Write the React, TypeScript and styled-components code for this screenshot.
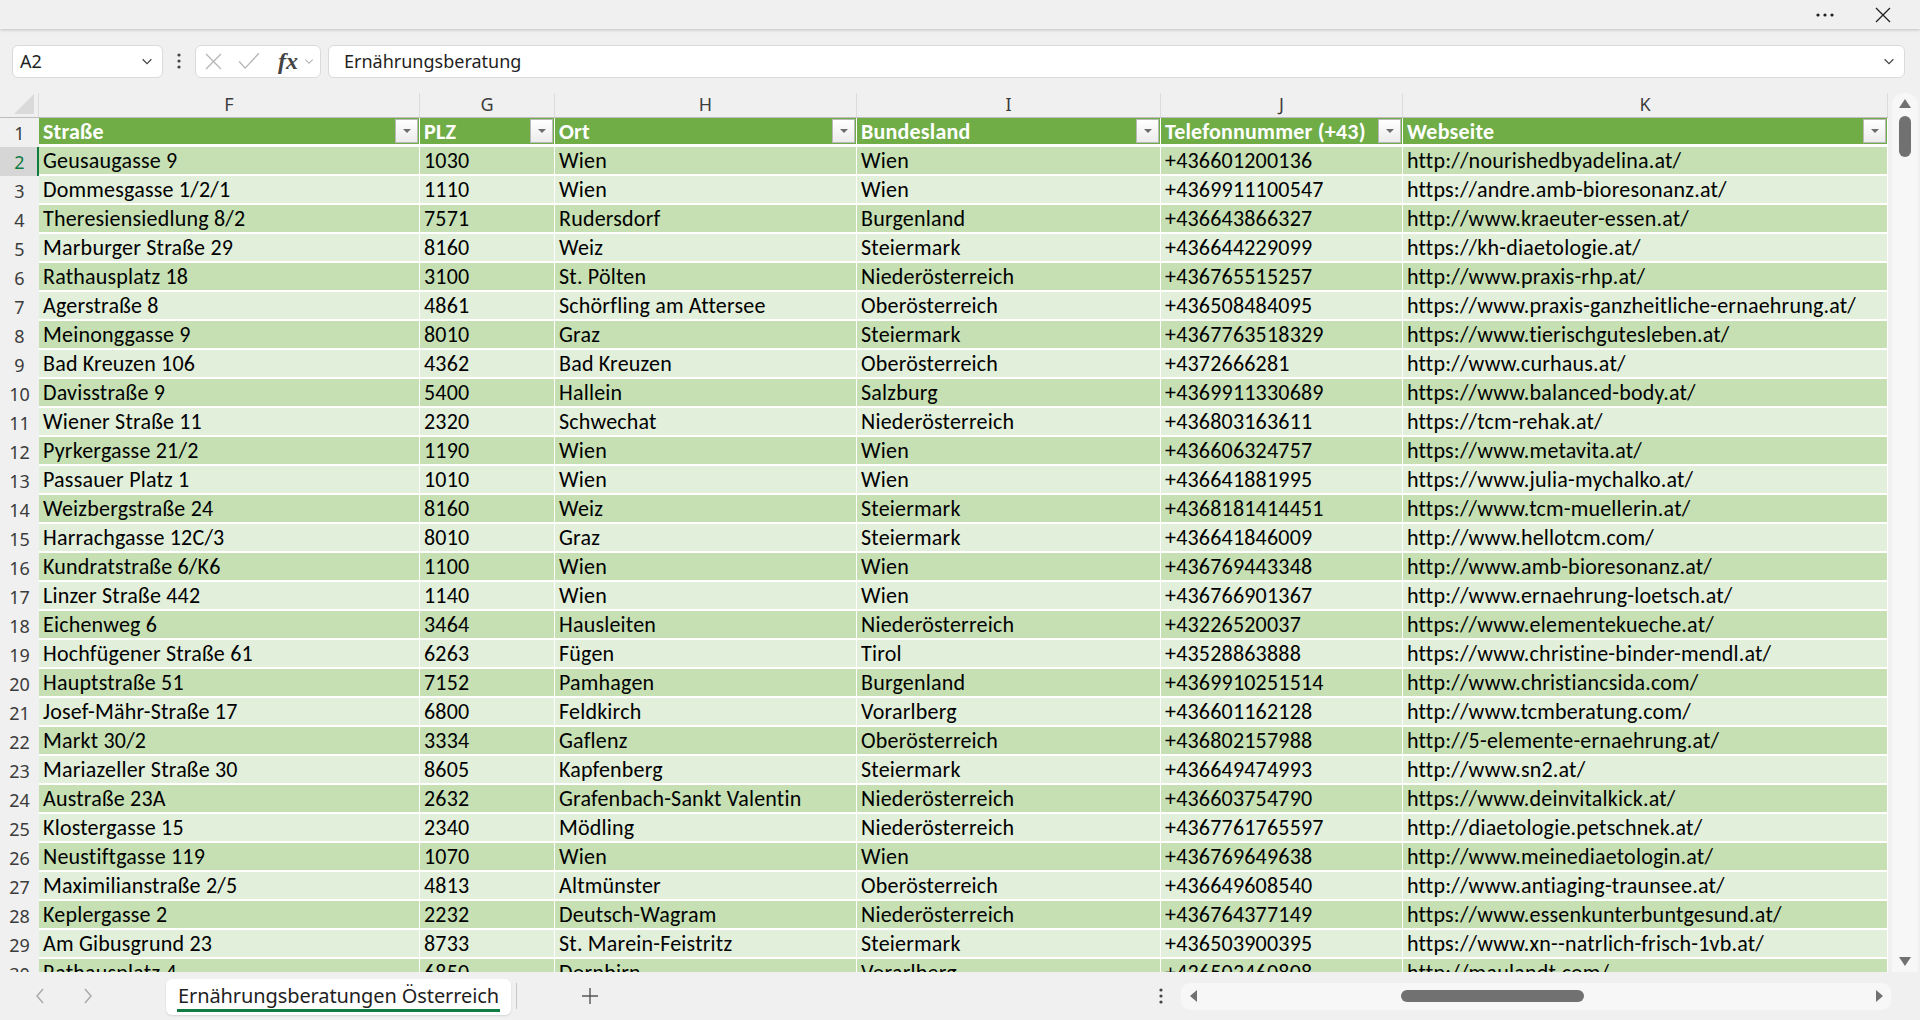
import styled, { createGlobalStyle } from "styled-components";

const GlobalStyle = createGlobalStyle`
  html, body {
    margin: 0;
    padding: 0;
    height: 100%;
    overflow: hidden;
  }
  body {
    background: #f0f0f0;
    font-family: "Noto Sans", "Open Sans", sans-serif;
  }
`;

const COLS = [39, 381, 135, 302, 304, 242, 485];
const LETTERS = ["F", "G", "H", "I", "J", "K"];
const HEADERS = ["Straße", "PLZ", "Ort", "Bundesland", "Telefonnummer (+43)", "Webseite"];

const ROWS: string[][] = [
  ["Geusaugasse 9", "1030", "Wien", "Wien", "+436601200136", "http://nourishedbyadelina.at/"],
  ["Dommesgasse 1/2/1", "1110", "Wien", "Wien", "+4369911100547", "https://andre.amb-bioresonanz.at/"],
  ["Theresiensiedlung 8/2", "7571", "Rudersdorf", "Burgenland", "+436643866327", "http://www.kraeuter-essen.at/"],
  ["Marburger Straße 29", "8160", "Weiz", "Steiermark", "+436644229099", "https://kh-diaetologie.at/"],
  ["Rathausplatz 18", "3100", "St. Pölten", "Niederösterreich", "+436765515257", "http://www.praxis-rhp.at/"],
  ["Agerstraße 8", "4861", "Schörfling am Attersee", "Oberösterreich", "+436508484095", "https://www.praxis-ganzheitliche-ernaehrung.at/"],
  ["Meinonggasse 9", "8010", "Graz", "Steiermark", "+4367763518329", "https://www.tierischgutesleben.at/"],
  ["Bad Kreuzen 106", "4362", "Bad Kreuzen", "Oberösterreich", "+4372666281", "http://www.curhaus.at/"],
  ["Davisstraße 9", "5400", "Hallein", "Salzburg", "+4369911330689", "https://www.balanced-body.at/"],
  ["Wiener Straße 11", "2320", "Schwechat", "Niederösterreich", "+436803163611", "https://tcm-rehak.at/"],
  ["Pyrkergasse 21/2", "1190", "Wien", "Wien", "+436606324757", "https://www.metavita.at/"],
  ["Passauer Platz 1", "1010", "Wien", "Wien", "+436641881995", "https://www.julia-mychalko.at/"],
  ["Weizbergstraße 24", "8160", "Weiz", "Steiermark", "+4368181414451", "https://www.tcm-muellerin.at/"],
  ["Harrachgasse 12C/3", "8010", "Graz", "Steiermark", "+436641846009", "http://www.hellotcm.com/"],
  ["Kundratstraße 6/K6", "1100", "Wien", "Wien", "+436769443348", "http://www.amb-bioresonanz.at/"],
  ["Linzer Straße 442", "1140", "Wien", "Wien", "+436766901367", "http://www.ernaehrung-loetsch.at/"],
  ["Eichenweg 6", "3464", "Hausleiten", "Niederösterreich", "+43226520037", "https://www.elementekueche.at/"],
  ["Hochfügener Straße 61", "6263", "Fügen", "Tirol", "+43528863888", "https://www.christine-binder-mendl.at/"],
  ["Hauptstraße 51", "7152", "Pamhagen", "Burgenland", "+4369910251514", "http://www.christiancsida.com/"],
  ["Josef-Mähr-Straße 17", "6800", "Feldkirch", "Vorarlberg", "+436601162128", "http://www.tcmberatung.com/"],
  ["Markt 30/2", "3334", "Gaflenz", "Oberösterreich", "+436802157988", "http://5-elemente-ernaehrung.at/"],
  ["Mariazeller Straße 30", "8605", "Kapfenberg", "Steiermark", "+436649474993", "http://www.sn2.at/"],
  ["Austraße 23A", "2632", "Grafenbach-Sankt Valentin", "Niederösterreich", "+436603754790", "https://www.deinvitalkick.at/"],
  ["Klostergasse 15", "2340", "Mödling", "Niederösterreich", "+4367761765597", "http://diaetologie.petschnek.at/"],
  ["Neustiftgasse 119", "1070", "Wien", "Wien", "+436769649638", "http://www.meinediaetologin.at/"],
  ["Maximilianstraße 2/5", "4813", "Altmünster", "Oberösterreich", "+436649608540", "http://www.antiaging-traunsee.at/"],
  ["Keplergasse 2", "2232", "Deutsch-Wagram", "Niederösterreich", "+436764377149", "https://www.essenkunterbuntgesund.at/"],
  ["Am Gibusgrund 23", "8733", "St. Marein-Feistritz", "Steiermark", "+436503900395", "https://www.xn--natrlich-frisch-1vb.at/"],
  ["Rathausplatz 4", "6850", "Dornbirn", "Vorarlberg", "+436503460808", "http://maulandt.com/"],
];

const Window = styled.div`
  width: 1920px;
  height: 1020px;
  display: flex;
  flex-direction: column;
  background: #f0f0f0;
  overflow: hidden;
`;

/* ---------- top strip ---------- */

const TopBar = styled.div`
  height: 29px;
  flex: none;
  display: flex;
  align-items: center;
  justify-content: flex-end;
  gap: 40px;
  padding-right: 29px;
  background: #f0f0f0;
  box-shadow: 0 1px 3px rgba(0, 0, 0, 0.2);
  position: relative;
  z-index: 2;
`;

const IconButton = styled.span`
  display: flex;
  align-items: center;
  justify-content: center;
  color: #1f1f1f;
`;

/* ---------- formula bar ---------- */

const FormulaBar = styled.div`
  height: 64px;
  flex: none;
  display: flex;
  align-items: center;
  padding: 0 15px 0 12px;
`;

const Field = styled.div<{ $width?: number }>`
  height: 33px;
  box-sizing: border-box;
  ${(p) => (p.$width ? `width: ${p.$width}px;` : "flex: 1;")}
  display: flex;
  align-items: center;
  background: #fff;
  border: 1px solid #dadada;
  border-radius: 6px;
  font-size: 18px;
  color: #1f1f1f;
`;

const NameText = styled.span`
  flex: 1;
  padding-left: 7px;
`;

const Chevron = styled.span<{ $muted?: boolean }>`
  display: flex;
  padding: ${(p) => (p.$muted ? "0 5px 0 0" : "0 8px")};
  color: ${(p) => (p.$muted ? "#aaa" : "#444")};
`;

const Kebab = styled.div`
  width: 32px;
  display: flex;
  justify-content: center;
  color: #444;
`;

const FxGroup = styled.div`
  flex: 1;
  display: flex;
  align-items: center;
  gap: 16px;
  padding-left: 9px;
  color: #b5b5b5;
`;

const Fx = styled.span`
  font-family: "Liberation Serif", serif;
  font-style: italic;
  font-weight: bold;
  font-size: 24px;
  line-height: 1;
  color: #444;
  margin-left: 2px;
`;

const FormulaGap = styled.div`
  width: 7px;
`;

const FormulaText = styled.span`
  flex: 1;
  padding-left: 15px;
`;

/* ---------- sheet ---------- */

const SheetArea = styled.div`
  flex: 1;
  display: flex;
  min-height: 0;
`;

const Sheet = styled.div`
  width: 1888px;
  overflow: hidden;
`;

const Row = styled.div`
  display: grid;
  grid-template-columns: ${COLS.map((c) => `${c}px`).join(" ")};
  height: 29px;
`;

const LetterRow = styled(Row)`
  height: 25px;
  box-sizing: border-box;
  border-bottom: 1px solid #bdbdbd;
`;

const Corner = styled.div`
  position: relative;
  border-right: 1px solid #dcdcdc;
  &::after {
    content: "";
    position: absolute;
    right: 4px;
    bottom: 3px;
    width: 0;
    height: 0;
    border-left: 20px solid transparent;
    border-bottom: 20px solid #dadada;
  }
`;

const Letter = styled.div`
  display: flex;
  align-items: center;
  justify-content: center;
  padding-bottom: 2px;
  font-size: 18px;
  color: #3c3c3c;
  border-right: 1px solid #dcdcdc;
  line-height: 1;
`;

const RowNum = styled.div<{ $active?: boolean }>`
  display: flex;
  align-items: center;
  justify-content: center;
  padding-top: 1px;
  font-size: 18px;
  color: ${(p) => (p.$active ? "#107c41" : "#3c3c3c")};
  background: ${(p) => (p.$active ? "#d6d6d6" : "#f0f0f0")};
  box-shadow: ${(p) => (p.$active ? "inset -2px 0 0 #107c41" : "none")};
`;

const Cell = styled.div<{ $band: "head" | "dark" | "light" }>`
  box-sizing: border-box;
  position: relative;
  padding-left: 4px;
  padding-top: 1px;
  border-right: 1px solid #fff;
  border-bottom: ${(p) => (p.$band === "head" ? "3px" : "2px")} solid #fff;
  background: ${(p) =>
    p.$band === "head" ? "#70ad47" : p.$band === "dark" ? "#c6e0b4" : "#e2efda"};
  color: ${(p) => (p.$band === "head" ? "#fff" : "#000")};
  font-family: "Carlito", "Lato", sans-serif;
  font-size: 22px;
  letter-spacing: 0.2px;
  font-weight: ${(p) => (p.$band === "head" ? 700 : 400)};
  line-height: 26px;
  white-space: nowrap;
  overflow: hidden;
`;

const FilterButton = styled.span`
  position: absolute;
  right: 1px;
  top: 1px;
  width: 23px;
  height: 24px;
  box-sizing: border-box;
  border: 1px solid #b9b9b9;
  background: linear-gradient(#ffffff, #ececec);
  display: flex;
  align-items: center;
  justify-content: center;
  &::after {
    content: "";
    border-left: 4px solid transparent;
    border-right: 4px solid transparent;
    border-top: 4px solid #6d6d6d;
  }
`;

const VScroll = styled.div`
  width: 26px;
  margin-left: 4px;
  display: flex;
  flex-direction: column;
  align-items: center;
  background: #f7f7f7;
  border-radius: 12px 12px 0 0;
  padding-top: 6px;
`;

const Thumb = styled.div<{ $vertical?: boolean }>`
  background: #717171;
  border-radius: 6px;
  ${(p) => (p.$vertical ? "width: 12px; height: 41px; margin-top: 8px;" : "height: 12px;")}
`;

const ScrollArrow = styled.span<{ $dir: "up" | "down" | "left" | "right" }>`
  width: 0;
  height: 0;
  ${(p) =>
    p.$dir === "up"
      ? "border-left: 6px solid transparent; border-right: 6px solid transparent; border-bottom: 9px solid #717171;"
      : p.$dir === "down"
      ? "border-left: 6px solid transparent; border-right: 6px solid transparent; border-top: 9px solid #717171;"
      : p.$dir === "left"
      ? "border-top: 6px solid transparent; border-bottom: 6px solid transparent; border-right: 7px solid #717171;"
      : "border-top: 6px solid transparent; border-bottom: 6px solid transparent; border-left: 7px solid #717171;"}
`;

const DownArrow = styled(ScrollArrow)`
  margin-top: auto;
  margin-bottom: 6px;
`;

/* ---------- bottom tab strip ---------- */

const TabBar = styled.div`
  height: 48px;
  flex: none;
  display: flex;
  align-items: center;
  background: #f0f0f0;
`;

const NavButton = styled.span`
  width: 48px;
  display: flex;
  justify-content: center;
  color: #a8a8a8;
`;

const NavGroup = styled.div`
  display: flex;
  padding-left: 16px;
  width: 150px;
`;

const SheetTab = styled.div`
  height: 36px;
  padding: 0 11px;
  display: flex;
  flex-direction: column;
  justify-content: center;
  background: #fff;
  border-radius: 6px;
  box-shadow: 0 1px 2px rgba(0, 0, 0, 0.12);
  font-size: 20px;
  letter-spacing: -0.1px;
  color: #1f1f1f;
  position: relative;
  top: 1px;
`;

const TabLabel = styled.span`
  line-height: 26px;
  border-bottom: 3px solid #107c41;
  padding: 0 1px;
`;

const TabDivider = styled.span`
  width: 1px;
  height: 26px;
  background: #c8c8c8;
  margin: 0 64px 0 5px;
`;

const AddSheet = styled.span`
  color: #555;
  display: flex;
`;

const HScrollWrap = styled.div`
  margin-left: auto;
  display: flex;
  align-items: center;
  padding-right: 29px;
`;

const HTrack = styled.div`
  width: 710px;
  height: 27px;
  margin-left: 18px;
  box-sizing: border-box;
  background: #f7f7f7;
  border-radius: 9px;
  display: flex;
  align-items: center;
  padding: 0 8px 0 9px;
`;

const HThumbArea = styled.div`
  flex: 1;
  display: flex;
  padding-left: 204px;
  padding-right: 292px;
  > div {
    flex: 1;
  }
`;

const Dots = styled.span`
  display: flex;
  color: #444;
`;

function ChevronDown({ size = 14 }: { size?: number }) {
  return (
    <svg width={size} height={size} viewBox="0 0 16 16" fill="none" stroke="currentColor" strokeWidth="1.4">
      <path d="M3 6l5 5 5-5" />
    </svg>
  );
}

function VerticalDots() {
  return (
    <svg width="4" height="16" viewBox="0 0 4 16" fill="currentColor">
      <circle cx="2" cy="2" r="1.6" />
      <circle cx="2" cy="8" r="1.6" />
      <circle cx="2" cy="14" r="1.6" />
    </svg>
  );
}

export default function App() {
  return (
    <Window>
      <GlobalStyle />
      <TopBar>
        <IconButton>
          <svg width="20" height="6" viewBox="0 0 20 6" fill="currentColor">
            <circle cx="3" cy="3" r="1.6" />
            <circle cx="10" cy="3" r="1.6" />
            <circle cx="17" cy="3" r="1.6" />
          </svg>
        </IconButton>
        <IconButton>
          <svg width="16" height="16" viewBox="0 0 16 16" stroke="currentColor" strokeWidth="1.3">
            <path d="M1 1l14 14M15 1L1 15" />
          </svg>
        </IconButton>
      </TopBar>

      <FormulaBar>
        <Field $width={151}>
          <NameText>A2</NameText>
          <Chevron>
            <ChevronDown />
          </Chevron>
        </Field>
        <Kebab>
          <VerticalDots />
        </Kebab>
        <Field $width={126}>
          <FxGroup>
            <svg width="17" height="17" viewBox="0 0 16 16" fill="none" stroke="currentColor" strokeWidth="1.2">
              <path d="M1 1l14 14M15 1L1 15" />
            </svg>
            <svg width="22" height="18" viewBox="0 0 20 16" fill="none" stroke="currentColor" strokeWidth="1.2">
              <path d="M1 8.5l5.5 6L19 1" />
            </svg>
            <Fx>fx</Fx>
          </FxGroup>
          <Chevron $muted>
            <ChevronDown size={12} />
          </Chevron>
        </Field>
        <FormulaGap />
        <Field>
          <FormulaText>Ernährungsberatung</FormulaText>
          <Chevron>
            <ChevronDown />
          </Chevron>
        </Field>
      </FormulaBar>

      <SheetArea>
        <Sheet>
          <LetterRow>
            <Corner />
            {LETTERS.map((l) => (
              <Letter key={l}>{l}</Letter>
            ))}
          </LetterRow>
          <Row>
            <RowNum>1</RowNum>
            {HEADERS.map((h) => (
              <Cell key={h} $band="head">
                {h}
                <FilterButton />
              </Cell>
            ))}
          </Row>
          {ROWS.map((r, i) => (
            <Row key={i}>
              <RowNum $active={i === 0}>{i + 2}</RowNum>
              {r.map((v, j) => (
                <Cell key={j} $band={i % 2 === 0 ? "dark" : "light"}>
                  {v}
                </Cell>
              ))}
            </Row>
          ))}
        </Sheet>
        <VScroll>
          <ScrollArrow $dir="up" />
          <Thumb $vertical />
          <DownArrow $dir="down" />
        </VScroll>
      </SheetArea>

      <TabBar>
        <NavGroup>
          <NavButton>
            <svg width="10" height="18" viewBox="0 0 10 18" fill="none" stroke="currentColor" strokeWidth="1.4">
              <path d="M8 2L2 9l6 7" />
            </svg>
          </NavButton>
          <NavButton>
            <svg width="10" height="18" viewBox="0 0 10 18" fill="none" stroke="currentColor" strokeWidth="1.4">
              <path d="M2 2l6 7-6 7" />
            </svg>
          </NavButton>
        </NavGroup>
        <SheetTab>
          <TabLabel>Ernährungsberatungen Österreich</TabLabel>
        </SheetTab>
        <TabDivider />
        <AddSheet>
          <svg width="18" height="18" viewBox="0 0 18 18" stroke="currentColor" strokeWidth="1.4">
            <path d="M9 1v16M1 9h16" />
          </svg>
        </AddSheet>
        <HScrollWrap>
          <Dots>
            <VerticalDots />
          </Dots>
          <HTrack>
            <ScrollArrow $dir="left" />
            <HThumbArea>
              <Thumb />
            </HThumbArea>
            <ScrollArrow $dir="right" />
          </HTrack>
        </HScrollWrap>
      </TabBar>
    </Window>
  );
}
